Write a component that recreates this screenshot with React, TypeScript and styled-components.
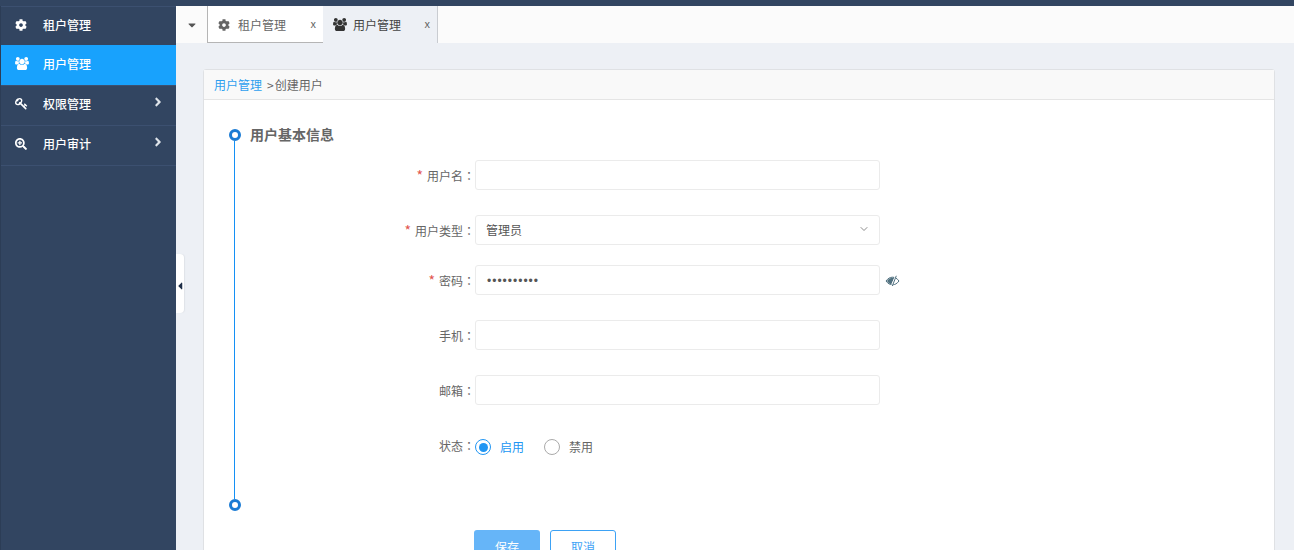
import React from 'react'
import styled, { createGlobalStyle } from 'styled-components'
import { FaCog, FaSearchPlus, FaAngleRight, FaCaretDown, FaCaretLeft } from 'react-icons/fa'
import { ChevronDown } from 'lucide-react'

const GlobalStyle = createGlobalStyle`
  html, body { margin: 0; padding: 0; height: 100%; overflow: hidden; }
  body { font-family: "Noto Sans CJK SC", "Liberation Sans", sans-serif; font-size: 12px; color: #606266; }
  * { box-sizing: border-box; }
`

const UsersIcon = () => (
  <svg width="14" height="13" viewBox="0 0 1920 1792" fill="currentColor">
    <path d="M593 896q-162 5-265 128h-134q-82 0-138-40.500t-56-118.500q0-353 124-353 6 0 43.500 21t97.500 42.500 119 21.500q67 0 133-23-5 37-5 66 0 139 81 256zm1071 637q0 120-73 189.500t-194 69.500h-874q-121 0-194-69.500t-73-189.500q0-53 3.500-103.500t14-109 26.500-108.500 43-97.500 62-81 85.500-53.500 111.500-20q10 0 43 21.500t73 48 107 48 135 21.500 135-21.500 107-48 73-48 43-21.500q61 0 111.500 20t85.500 53.500 62 81 43 97.500 26.500 108.500 14 109 3.500 103.500zm-1024-1277q0 106-75 181t-181 75-181-75-75-181 75-181 181-75 181 75 75 181zm704 384q0 159-112.500 271.500t-271.500 112.500-271.500-112.500-112.500-271.500 112.500-271.500 271.500-112.500 271.500 112.500 112.500 271.500zm576 225q0 78-56 118.500t-138 40.500h-134q-103-123-265-128 81-117 81-256 0-29-5-66 66 23 133 23 59 0 119-21.500t97.500-42.500 43.500-21q124 0 124 353zm-128-609q0 106-75 181t-181 75-181-75-75-181 75-181 181-75 181 75 75 181z" />
  </svg>
)

const KeyIcon = () => (
  <svg width="13" height="13" viewBox="0 0 1792 1792" fill="currentColor">
    <path d="M832 512q0-80-56-136t-136-56-136 56-56 136q0 42 19 83-41-19-83-19-80 0-136 56t-56 136 56 136 136 56 136-56 56-136q0-42-19-83 41 19 83 19 80 0 136-56t56-136zm851 704q0 17-49 66t-66 49q-9 0-28.500-16t-36.500-33-38.500-40-24.500-26l-96 96 220 220q28 28 28 68 0 42-39 81t-81 39q-40 0-68-28l-671-671q-176 131-365 131-163 0-265.500-102.500t-102.500-265.500q0-160 95-313t248-248 313-95q163 0 265.500 102.500t102.500 265.500q0 189-131 365l355 355 96-96q-3-3-26-24.500t-40-38.500-33-36.500-16-28.500q0-17 49-66t66-49q13 0 23 10 6 6 46 44.500t82 79.500 86.500 86 73 78 28.500 41z" />
  </svg>
)

const EyeOff = () => (
  <svg width="15" height="12" viewBox="0 0 15 12">
    <path d="M1 6c2-2.6 4-3.800 6.500-3.800S12 3.400 14 6c-2 2.600-4 3.800-6.500 3.800S3 8.600 1 6z" fill="none" stroke="#50707f" strokeWidth="1" />
    <path d="M2 6c1.700-2.200 3.300-3.300 5.500-3.300L9.500 2.500 6.300 9.300C4.700 9 3.300 7.800 2 6z" fill="#50707f" />
    <path d="M10.800 .8 6.800 11" stroke="#fff" strokeWidth="1.600" />
    <path d="M11.300 .8 7.300 11" stroke="#50707f" strokeWidth="1" />
  </svg>
)

const menu = [
  { label: '租户管理', icon: <FaCog />, active: false, arrow: false },
  { label: '用户管理', icon: <UsersIcon />, active: true, arrow: false },
  { label: '权限管理', icon: <KeyIcon />, active: false, arrow: true },
  { label: '用户审计', icon: <FaSearchPlus />, active: false, arrow: true },
]

const App = (): JSX.Element => {
  return (
    <Page>
      <GlobalStyle />
      <TopBar />
      <Main>
        <Sidebar>
          {menu.map((m) => (
            <MenuItem key={m.label} $active={m.active}>
              <MenuIcon>{m.icon}</MenuIcon>
              <span>{m.label}</span>
              {m.arrow && <MenuArrow><FaAngleRight /></MenuArrow>}
            </MenuItem>
          ))}
        </Sidebar>
        <Content>
          <CollapseHandle><FaCaretLeft /></CollapseHandle>
          <TabBar>
            <TabToggle><FaCaretDown /></TabToggle>
            <Tab>
              <TabIcon><FaCog /></TabIcon>
              <TabLabel>租户管理</TabLabel>
              <TabClose>x</TabClose>
            </Tab>
            <Tab $active>
              <TabIcon $active><UsersIcon /></TabIcon>
              <TabLabel $active>用户管理</TabLabel>
              <TabClose>x</TabClose>
            </Tab>
          </TabBar>
          <Card>
            <CardHeader>
              <Crumb>用户管理</Crumb>
              <CrumbRest>&gt;</CrumbRest>
              <span>创建用户</span>
            </CardHeader>
            <CardBody>
              <Timeline>
                <Dot />
                <Line />
                <Dot />
              </Timeline>
              <FormArea>
                <SectionTitle>用户基本信息</SectionTitle>
                <FormRow $top={11}>
                  <FieldLabel><Req>*</Req>用户名<Colon>：</Colon></FieldLabel>
                  <Input />
                </FormRow>
                <FormRow $top={25}>
                  <FieldLabel><Req>*</Req>用户类型<Colon>：</Colon></FieldLabel>
                  <Input>
                    <SelectValue>管理员</SelectValue>
                    <SelectArrow><ChevronDown size={12} strokeWidth={1.5} /></SelectArrow>
                  </Input>
                </FormRow>
                <FormRow $top={20}>
                  <FieldLabel><Req>*</Req>密码<Colon>：</Colon></FieldLabel>
                  <Input><Dots>••••••••••</Dots></Input>
                  <EyeWrap><EyeOff /></EyeWrap>
                </FormRow>
                <FormRow $top={25}>
                  <FieldLabel>手机<Colon>：</Colon></FieldLabel>
                  <Input />
                </FormRow>
                <FormRow $top={25}>
                  <FieldLabel>邮箱<Colon>：</Colon></FieldLabel>
                  <Input />
                </FormRow>
                <RadioRow>
                  <RadioLabel>状态<Colon>：</Colon></RadioLabel>
                  <Radio $checked />
                  <RadioText $checked>启用</RadioText>
                  <Radio />
                  <RadioText>禁用</RadioText>
                </RadioRow>
                <Buttons>
                  <SaveButton>保存</SaveButton>
                  <CancelButton>取消</CancelButton>
                </Buttons>
              </FormArea>
            </CardBody>
          </Card>
        </Content>
      </Main>
    </Page>
  )
}

const Page = styled.div`
  height: 550px;
  width: 1294px;
  display: flex;
  flex-direction: column;
  overflow: hidden;
  background: #edf0f5;
`

const TopBar = styled.div`
  height: 6px;
  flex: none;
  background: #324561;
`

const Main = styled.div`
  flex: 1;
  display: flex;
  min-height: 0;
`

const Sidebar = styled.aside`
  width: 176px;
  flex: none;
  background: #324561;
  border-left: 1px solid #2c3d56;
`

const MenuItem = styled.div<{ $active?: boolean }>`
  height: 40px;
  display: flex;
  align-items: center;
  position: relative;
  padding: 0 0 5px 14px;
  color: #fff;
  font-size: 12px;
  font-weight: 500;
  border-top: 1px solid ${(p) => (p.$active ? '#18a2fd' : '#3c5070')};
  background: ${(p) => (p.$active ? '#18a2fd' : 'transparent')};
  &:first-child { height: 39px; padding-bottom: 3px; }
  &:last-child { border-bottom: 1px solid #3c5070; height: 41px; padding-bottom: 4px; }
`

const MenuIcon = styled.span`
  width: 28px;
  flex: none;
  display: flex;
  font-size: 12px;
`

const MenuArrow = styled.span`
  position: absolute;
  right: 11px;
  top: 9px;
  font-size: 14px;
  color: #dfe4ea;
  display: flex;
`

const Content = styled.div`
  flex: 1;
  min-width: 0;
  position: relative;
`

const CollapseHandle = styled.div`
  position: absolute;
  left: 0;
  top: 248px;
  width: 8px;
  height: 59px;
  padding-top: 4px;
  background: #fff;
  border-radius: 0 4px 4px 0;
  box-shadow: 1px 0 1px #dfe3e8;
  display: flex;
  align-items: center;
  justify-content: center;
  font-size: 12px;
  color: #1f2f48;
`

const TabBar = styled.div`
  height: 37px;
  display: flex;
  background: #fbfbfb;
  border-left: 1px solid #fff;
`

const TabToggle = styled.div`
  width: 30px;
  display: flex;
  align-items: center;
  justify-content: center;
  font-size: 12px;
  color: #555;
`

const Tab = styled.div<{ $active?: boolean }>`
  width: ${(p) => (p.$active ? '115px' : '116px')};
  display: flex;
  align-items: center;
  padding: ${(p) => (p.$active ? '0 0 0 10px' : '1px 0 0 10px')};
  position: relative;
  background: ${(p) => (p.$active ? '#edf0f5' : '#fff')};
  border-left: ${(p) => (p.$active ? 'none' : '1px solid #b5b5b5')};
  border-right: ${(p) => (p.$active ? '1px solid #c9ccd1' : 'none')};
  border-bottom: ${(p) => (p.$active ? 'none' : '1px solid #b5b5b5')};
`

const TabIcon = styled.span<{ $active?: boolean }>`
  width: 20px;
  display: flex;
  font-size: 12px;
  color: ${(p) => (p.$active ? '#333' : '#666')};
`

const TabLabel = styled.span<{ $active?: boolean }>`
  color: ${(p) => (p.$active ? '#444' : '#666')};
`

const TabClose = styled.span`
  position: absolute;
  right: 7px;
  top: 10px;
  font-size: 11px;
  line-height: 14px;
  color: #666;
`

const Card = styled.section`
  margin: 26px 19px 0 27px;
  background: #fff;
  border: 1px solid #dfe1e4;
  border-radius: 3px;
  height: 600px;
`

const CardHeader = styled.div`
  height: 30px;
  display: flex;
  align-items: center;
  padding-left: 10px;
  background: #f9f9f9;
  border-bottom: 1px solid #e5e5e5;
  color: #666;
`

const Crumb = styled.span`
  color: #2d9fef;
`

const CrumbRest = styled.span`
  margin: 0 1px 0 5px;
`

const CardBody = styled.div`
  display: flex;
  padding: 29px 0 0 24px;
`

const Timeline = styled.div`
  width: 13px;
  height: 382px;
  flex: none;
  display: flex;
  flex-direction: column;
  align-items: center;
`

const Dot = styled.span`
  width: 12px;
  height: 12px;
  flex: none;
  border-radius: 50%;
  border: 3px solid #1a7bd4;
  background: #fff;
`

const Line = styled.span`
  flex: 1;
  width: 1px;
  background: #1490f5;
`

const FormArea = styled.div`
  margin-left: 9px;
  flex: 1;
  min-width: 0;
`

const SectionTitle = styled.h3`
  margin: 0;
  height: 20px;
  line-height: 11px;
  font-size: 14px;
  font-weight: 700;
  color: #666;
`

const FormRow = styled.div<{ $top: number }>`
  display: flex;
  align-items: center;
  margin-top: ${(p) => p.$top}px;
  height: 30px;
`

const FieldLabel = styled.label`
  width: 225px;
  flex: none;
  text-align: right;
  color: #666;
`

const Colon = styled.span`
  font-family: "Noto Sans CJK TC", sans-serif;
`

const Req = styled.span`
  color: #e2564f;
  font-size: 14px;
  margin-right: 4px;
`

const Input = styled.div`
  width: 405px;
  height: 30px;
  flex: none;
  display: flex;
  align-items: center;
  position: relative;
  padding-left: 10px;
  border: 1px solid #ebebeb;
  border-radius: 3px;
  background: #fff;
  color: #555;
`

const SelectValue = styled.span`
  margin-top: -1px;
`

const SelectArrow = styled.span`
  position: absolute;
  right: 9px;
  top: 7px;
  display: flex;
  color: #666;
`

const Dots = styled.span`
  font-family: "Liberation Sans", sans-serif;
  font-size: 12px;
  letter-spacing: 1px;
  margin: 2px 0 0 1px;
  color: #555;
`

const EyeWrap = styled.span`
  margin: 2px 0 0 5px;
  display: flex;
`

const RadioRow = styled.div`
  display: flex;
  align-items: center;
  margin-top: 33px;
  height: 18px;
`

const RadioLabel = styled.span`
  width: 225px;
  flex: none;
  text-align: right;
  margin-top: -3px;
  color: #666;
`

const Radio = styled.span<{ $checked?: boolean }>`
  width: 16px;
  height: 16px;
  flex: none;
  border-radius: 50%;
  background: #fff;
  border: 1px solid ${(p) => (p.$checked ? '#2196f3' : '#aaa')};
  display: flex;
  align-items: center;
  justify-content: center;
  &::after {
    content: '';
    display: ${(p) => (p.$checked ? 'block' : 'none')};
    width: 9px;
    height: 9px;
    border-radius: 50%;
    background: #2196f3;
  }
`

const RadioText = styled.span<{ $checked?: boolean }>`
  margin: -1px 20px 0 9px;
  color: ${(p) => (p.$checked ? '#2196f3' : '#666')};
`

const Buttons = styled.div`
  display: flex;
  gap: 10px;
  margin: 74px 0 0 224px;
`

const SaveButton = styled.button`
  width: 66px;
  height: 32px;
  padding: 0;
  border: none;
  border-radius: 3px;
  background: #66b5f8;
  color: #fff;
  font: inherit;
`

const CancelButton = styled.button`
  width: 66px;
  height: 32px;
  padding: 0;
  border: 1px solid #3da2f5;
  border-radius: 3px;
  background: #fff;
  color: #3da2f5;
  font: inherit;
`

export default App
